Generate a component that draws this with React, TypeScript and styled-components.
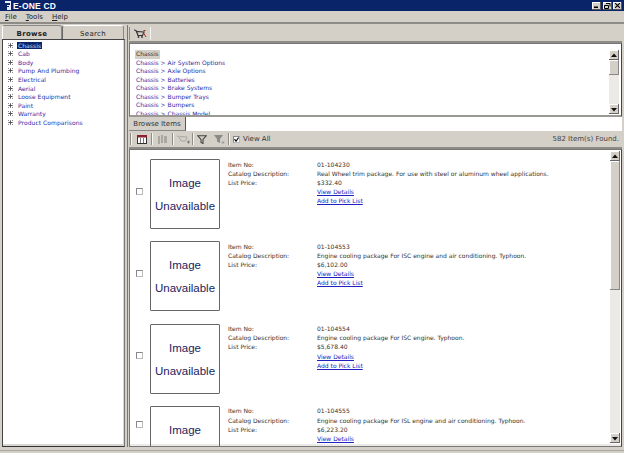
import React from "react";
import styled, { createGlobalStyle } from "styled-components";

const Global = createGlobalStyle`
  html, body { margin: 0; padding: 0; background: #d4d0c8; }
  #root { width: 624px; height: 453px; overflow: hidden; }
`;
const Win = styled.div`
  width: 624px; height: 453px; display: flex; flex-direction: column; background: #d4d0c8;
  font-family: "DejaVu Sans", Verdana, sans-serif; font-size: 6px; color: #333; overflow: hidden;
`;
const TitleBar = styled.div`
  height: 11px; flex: none; background: #0a246a; display: flex; align-items: center; padding: 0 2px 0 2px; color: #fff;
  font: bold 8.5px "Liberation Sans", Arial, sans-serif; letter-spacing: .2px;
`;
const TitleText = styled.span`flex: 1; padding-left: 2px;`;
const WinBtn = styled.div`
  width: 9px; height: 8px; margin-left: 1.5px; background: #d4d0c8; display: flex; align-items: center; justify-content: center;
  box-shadow: inset -1px -1px 0 #555, inset 1px 1px 0 #fff;
`;
const MenuBar = styled.div`
  height: 11px; flex: none; display: flex; align-items: center; gap: 9px; padding: 0 0 0 5px;
  font: 7px "DejaVu Sans", sans-serif; color: #222; border-bottom: 2px solid #8e8c86;
`;
const MenuItem = styled.span`&::first-letter { text-decoration: underline; }`;
const Main = styled.div`flex: 1; min-height: 0; display: flex; gap: 2px; padding: 1px 2px 0 2px;`;
const Left = styled.div`width: 123px; flex: none; display: flex; flex-direction: column;`;
const Tabs = styled.div`height: 14px; flex: none; display: flex;`;
const Tab = styled.div<{ $active?: boolean }>`
  width: ${p => (p.$active ? 60 : 62)}px; display: flex; align-items: center; justify-content: center; box-sizing: border-box;
  font: ${p => (p.$active ? "bold" : "normal")} 7px "DejaVu Sans", sans-serif; letter-spacing: .3px;
  padding-top: 2px; border: 1px solid #8a8880; border-bottom: none; border-radius: 3px 3px 0 0; color: #222;
  border-left-color: ${p => (p.$active ? "#fff" : "#666")}; border-top-color: ${p => (p.$active ? "#888" : "#fff")};
`;
const TreeBox = styled.div`
  flex: 1; min-height: 0; background: #fff; border: 1px solid #444; border-right-color: #777; border-bottom-color: #333;
  padding: 1px 0 0 5px; display: flex; flex-direction: column; box-shadow: inset 0 -2px 0 #d8d6d0, inset -1px 0 0 #d8d6d0;
`;
const TreeRow = styled.div`height: 8.55px; flex: none; display: flex; align-items: center; gap: 3px; color: #2c2ca8; white-space: nowrap;`;
const Expander = styled.span`
  width: 5px; height: 5px; flex: none; border: 1px dotted #8a8a8a; position: relative; box-sizing: border-box; margin-right: 1px;
  &::before { content: ""; position: absolute; left: 0; right: 0; top: 1px; height: 1px; background: #555; }
  &::after { content: ""; position: absolute; top: 0; bottom: 0; left: 1px; width: 1px; background: #555; }
`;
const TreeLabel = styled.span<{ $sel?: boolean }>`
  padding: 0 1px; letter-spacing: .05px; ${p => p.$sel && "background:#0a246a;color:#d8d8f4;"}
`;
const Right = styled.div`flex: 1; min-width: 0; display: flex; flex-direction: column; border-left: 1px solid #777; padding-left: 1px;`;
const TopTool = styled.div`height: 16px; flex: none; display: flex; align-items: center; border-bottom: 2px solid #8e8c86;`;
const ToolCell = styled.div`
  width: 20px; height: 13px; display: flex; align-items: center; justify-content: center;
  border-left: 1px solid #8e8c86; border-right: 1px solid #f4f4f0;
`;
const CrumbBox = styled.div`
  height: 74px; flex: none; background: #fff; border: 1px solid #777; border-right-color: #444; border-bottom: 2px solid #9a9892; display: flex; overflow: hidden; box-sizing: border-box;
`;
const CrumbList = styled.div`flex: 1; padding: 6px 0 0 6px; overflow: hidden; display: flex; flex-direction: column;`;
const Crumb = styled.div<{ $sel?: boolean }>`
  height: 8.5px; flex: none; line-height: 8.5px; color: ${p => (p.$sel ? "#333" : "#2c2ca8")}; white-space: nowrap;
  ${p => p.$sel && "background:#d4d0c8; align-self:flex-start; padding:0 1px; margin-left:-1px;"}
`;
const Scroll = styled.div<{ $top: number; $right: number; $bottom: number }>`
  width: 10px; flex: none; margin: ${p => p.$top}px ${p => p.$right}px ${p => p.$bottom}px 0; background: #eceae6; display: flex; flex-direction: column;
`;
const ScrollBtn = styled.div`
  width: 10px; height: 10px; flex: none; background: #d4d0c8; box-shadow: inset -1px -1px 0 #666, inset 1px 1px 0 #fff;
  display: flex; align-items: center; justify-content: center;
`;
const Thumb = styled.div<{ $h: number }>`
  width: 10px; height: ${p => p.$h}px; flex: none; background: #d4d0c8; box-shadow: inset -1px -1px 0 #888, inset 1px 1px 0 #fff;
`;
const Spacer = styled.div`flex: 1;`;
const TabStrip = styled.div`height: 14px; flex: none; background: #fff; display: flex; align-items: flex-end;`;
const ItemsTab = styled.div`
  width: 57px; height: 14px; box-sizing: border-box; background: #d4d0c8; display: flex; align-items: center; justify-content: center;
  font: 7px "DejaVu Sans", sans-serif; color: #333; border-right: 1px solid #555; border-bottom: 1px solid #888;
`;
const BottomTool = styled.div`
  height: 16px; flex: none; display: flex; align-items: center; padding: 0 3px 0 1px; border-bottom: 2px solid #8e8c86;
`;
const IconCell = styled.div<{ $w: number }>`
  width: ${p => p.$w}px; height: 13px; flex: none; display: flex; align-items: center; justify-content: center;
`;
const Sep = styled.div`width: 1px; height: 12px; flex: none; background: #8e8c86; border-right: 1px solid #f4f4f0;`;
const Check = styled.div`
  width: 7px; height: 7px; flex: none; box-sizing: border-box; background: #fff; border: 1px solid #888; border-right-color:#bbb; border-bottom-color:#bbb;
  display: flex; align-items: center; justify-content: center;
`;
const ViewAll = styled.div`display: flex; align-items: center; gap: 3px; font: 7px "DejaVu Sans", sans-serif; color: #333; margin-left: 3px;`;
const Found = styled.div`margin-left: auto; font: 7px "DejaVu Sans", sans-serif; color: #444;`;
const Results = styled.div`
  flex: 1; min-height: 0; background: #fff; border: 1px solid #777; border-right-color: #444; display: flex; overflow: hidden; box-shadow: inset 0 -2px 0 #eceae6;
`;
const ResultList = styled.div`flex: 1; min-width: 0; overflow: hidden; padding: 9px 0 0 6px;`;
const Item = styled.div`height: 82.3px; display: flex; align-items: flex-start;`;
const RowCheck = styled.div<{ $h: number }>`width: 14px; height: ${p => p.$h}px; display: flex; align-items: center; flex: none;`;
const ImageBox = styled.div`
  width: 70px; height: 70px; flex: none; box-sizing: border-box; border: 1px solid #666; border-radius: 1px; display: flex; flex-direction: column;
  align-items: center; justify-content: flex-start; padding-top: 17px; gap: 10px; font: 11.5px/13px "Liberation Sans", Arial, sans-serif; color: #1c1c5e;
`;
const Info = styled.div`
  margin-left: 8px; padding-top: 0.5px; display: grid; grid-template-columns: 89px auto; grid-auto-rows: 9.15px; line-height: 9.15px; white-space: nowrap; color: #333;
`;
const Link = styled.a`grid-column: 2; color: #2020c0; text-decoration: underline;`;
const StatusBar = styled.div`height: 6px; flex: none; box-sizing: border-box; padding-top: 3px;`;
const StatusLine = styled.div`height: 1px; background: #aaa8a2;`;

const Arrow = ({ up }: { up?: boolean }) => (
  <svg width="6" height="5" viewBox="0 0 6 5"><path d={up ? "M3 .5L6 4H0z" : "M3 4.5L6 1H0z"} fill="#111" /></svg>
);
const TopCart = () => (
  <svg width="13" height="9" viewBox="0 0 13 9" fill="none">
    <path d="M0 1l2 .5 2 5h4.500L10 3 3 2.500" stroke="#333" strokeWidth="1.2" />
    <path d="M9.500 1.500h2M9 3l3 5" stroke="#b03020" strokeWidth="1" />
    <circle cx="4.500" cy="8" r=".9" fill="#333" /><circle cx="8" cy="8" r=".9" fill="#333" />
  </svg>
);
const DimCart = () => (
  <svg width="13" height="10" viewBox="0 0 13 10" fill="none" stroke="#a8a8a0" strokeWidth="1">
    <path d="M0 2l2 .5 2 4.500h4.500L10 3 3 2.500" /><path d="M10 8h3M11.500 6.500v3" stroke="#777" />
  </svg>
);
const Funnel = () => (
  <svg width="10" height="9" viewBox="0 0 10 9"><path d="M.8.8h8.400L6 4.500V8.500L4 7.500v-3z" fill="none" stroke="#444" strokeWidth="1.1" /></svg>
);
const DimFunnel = () => (
  <svg width="11" height="10" viewBox="0 0 11 10"><path d="M0 1h9L6 5v4L3 7.500V5z" fill="#8a8a86" /><path d="M8 7.500l2 2M10 7.500l-2 2" stroke="#777" strokeWidth=".8" /></svg>
);

const tree = ["Chassis", "Cab", "Body", "Pump And Plumbing", "Electrical", "Aerial", "Loose Equipment", "Paint", "Warranty", "Product Comparisons"];
const crumbs = ["Air System Options", "Axle Options", "Batteries", "Brake Systems", "Bumper Trays", "Bumpers", "Chassis Model"];
const items = [
  { no: "01-104230", desc: "Real Wheel trim package. For use with steel or aluminum wheel applications.", price: "$332.40" },
  { no: "01-104553", desc: "Engine cooling package For ISC engine and air conditioning. Typhoon.", price: "$6,102.00" },
  { no: "01-104554", desc: "Engine cooling package For ISC engine. Typhoon.", price: "$5,678.40" },
  { no: "01-104555", desc: "Engine cooling package For ISL engine and air conditioning. Typhoon.", price: "$6,223.20" },
];

export default function App() {
  return (
    <Win>
      <Global />
      <TitleBar>
        <svg width="9" height="9" viewBox="0 0 9 9"><rect width="9" height="9" fill="#e8ecf8" /><path d="M0 0h3v9H0zM3 2h5v2H5v1h2v1H5v3H3z" fill="#0a246a" /></svg>
        <TitleText>E-ONE CD</TitleText>
        <WinBtn><svg width="5" height="5" viewBox="0 0 5 5"><path d="M0 3.500h4v1.500H0z" fill="#000" /></svg></WinBtn>
        <WinBtn><svg width="7" height="6" viewBox="0 0 7 6" fill="none" stroke="#000"><path d="M2 .5h4v3M.5 2.500h4v3h-4z" /></svg></WinBtn>
        <WinBtn><svg width="5" height="5" viewBox="0 0 5 5" stroke="#000" strokeWidth="1.1"><path d="M0 0l5 5M5 0L0 5" /></svg></WinBtn>
      </TitleBar>
      <MenuBar>
        <MenuItem>File</MenuItem><MenuItem>Tools</MenuItem><MenuItem>Help</MenuItem>
      </MenuBar>
      <Main>
        <Left>
          <Tabs><Tab $active>Browse</Tab><Tab>Search</Tab></Tabs>
          <TreeBox>
            {tree.map((t, i) => (
              <TreeRow key={t}><Expander /><TreeLabel $sel={i === 0}>{t}</TreeLabel></TreeRow>
            ))}
          </TreeBox>
        </Left>
        <Right>
          <TopTool><ToolCell><TopCart /></ToolCell></TopTool>
          <CrumbBox>
            <CrumbList>
              <Crumb $sel>Chassis</Crumb>
              {crumbs.map(c => <Crumb key={c}>Chassis &gt; {c}</Crumb>)}
            </CrumbList>
            <Scroll $top={6} $right={2} $bottom={1}>
              <ScrollBtn><Arrow up /></ScrollBtn><Thumb $h={15} /><Spacer /><ScrollBtn><Arrow /></ScrollBtn>
            </Scroll>
          </CrumbBox>
          <TabStrip><ItemsTab>Browse Items</ItemsTab></TabStrip>
          <BottomTool>
            <Sep />
            <IconCell $w={19}>
              <svg width="10" height="9" viewBox="0 0 10 9"><rect x=".5" y=".5" width="9" height="8" fill="#fff" stroke="#333" /><rect x="0" y="0" width="10" height="2.500" fill="#8a2030" /><path d="M3.500 3v5M6.500 3v5" stroke="#777" /></svg>
            </IconCell>
            <Sep />
            <IconCell $w={19}>
              <svg width="9" height="9" viewBox="0 0 9 9" fill="#a8a8a0"><path d="M0 1h2v8H0zM3 0h2v8H3zM6 1h3v7H6z" /></svg>
            </IconCell>
            <Sep />
            <IconCell $w={18}><DimCart /></IconCell>
            <Sep />
            <IconCell $w={16}><Funnel /></IconCell>
            <IconCell $w={18}><DimFunnel /></IconCell>
            <Sep />
            <ViewAll>
              <Check><svg width="5" height="5" viewBox="0 0 5 5" fill="none" stroke="#000" strokeWidth="1.1"><path d="M.5 2.200l1.500 2L4.600.5" /></svg></Check>
              View All
            </ViewAll>
            <Found>582 Item(s) Found.</Found>
          </BottomTool>
          <Results>
            <ResultList>
              {items.map((it, i) => (
                <Item key={it.no}>
                  <RowCheck $h={i < 3 ? 64 : 37}><Check /></RowCheck>
                  <ImageBox>
                    <span>Image</span>
                    {i < 3 && <span>Unavailable</span>}
                  </ImageBox>
                  <Info>
                    <span>Item No:</span><span>{it.no}</span>
                    <span>Catalog Description:</span><span>{it.desc}</span>
                    <span>List Price:</span><span>{it.price}</span>
                    <Link>View Details</Link>
                    {i < 3 && <Link>Add to Pick List</Link>}
                  </Info>
                </Item>
              ))}
            </ResultList>
            <Scroll $top={1} $right={1} $bottom={3}>
              <ScrollBtn><Arrow up /></ScrollBtn><Thumb $h={129} /><Spacer /><ScrollBtn><Arrow /></ScrollBtn>
            </Scroll>
          </Results>
        </Right>
      </Main>
      <StatusBar><StatusLine /></StatusBar>
    </Win>
  );
}
